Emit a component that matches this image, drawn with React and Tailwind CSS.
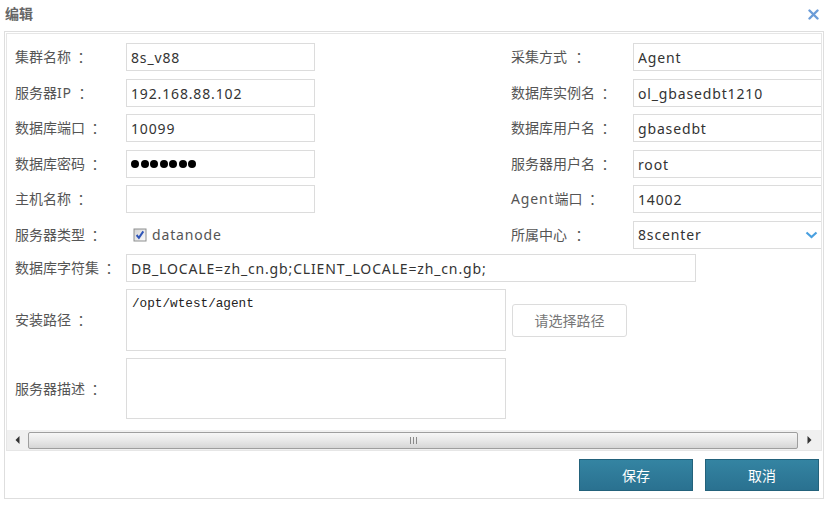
import React from "react";

const FONT = { fontFamily: '"Noto Sans", "Noto Sans CJK SC", sans-serif' };
const COLON_FONT = { fontFamily: '"Noto Sans CJK JP", sans-serif' };

function Field({ value, className = "" }) {
  return (
    <input
      readOnly
      defaultValue={value}
      className={`h-[28px] border border-[#dcdcdc] bg-white px-[4px] text-[14px] tracking-[0.85px] text-[#333] outline-none ${className}`}
      style={FONT}
    />
  );
}

// Form label: text followed by a centred full-width colon
function Label({ children, className = "", wide = false }) {
  return (
    <div className={`shrink-0 h-[28px] flex items-center overflow-visible text-[14px] text-[#555] leading-[20px] whitespace-nowrap ${className}`}>
      <span>{children}</span>
      <span className={wide ? "ml-[5px]" : "ml-[3px]"} style={COLON_FONT}>：</span>
    </div>
  );
}

function Latin({ children }) {
  return <span className="tracking-[0.85px]">{children}</span>;
}

function PasswordField() {
  return (
    <div className="h-[28px] w-[189px] shrink-0 border border-[#dcdcdc] bg-white px-[4px] flex items-center gap-[1.5px]">
      {[0, 1, 2, 3, 4, 5, 6].map((i) => (
        <span key={i} className="block w-[8px] h-[8px] rounded-full bg-black" />
      ))}
    </div>
  );
}

function CheckBox() {
  return (
    <svg width="14" height="14" viewBox="0 0 14 14" className="shrink-0">
      <defs>
        <linearGradient id="cbg" x1="0" y1="0" x2="1" y2="1">
          <stop offset="0" stopColor="#d4d4d4" />
          <stop offset="1" stopColor="#fbfbfb" />
        </linearGradient>
      </defs>
      <rect x="0.5" y="0.5" width="13" height="13" fill="#8e8f8f" />
      <rect x="1.5" y="1.5" width="11" height="11" fill="url(#cbg)" />
      <path d="M3.6 7 L5.9 9.8 L10.3 3.4" fill="none" stroke="#2f55b8" strokeWidth="2" />
    </svg>
  );
}

function Row({ left, right, className = "" }) {
  return (
    <div className={`flex items-center h-[28px] ${className}`}>
      <div className="flex items-center w-[496px] shrink-0">{left}</div>
      {right}
    </div>
  );
}

export default function App() {
  return (
    <div className="w-[832px] h-[506px] bg-white relative overflow-hidden" style={FONT}>
      {/* dialog title bar */}
      <div className="h-[31px] flex items-start justify-between pl-[5px] pr-[13px] pt-[4px]">
        <div className="text-[14px] font-bold text-[#666] leading-[20px]">编辑</div>
        <svg width="11" height="11" viewBox="0 0 11 11" className="mt-[5px]">
          <path d="M1.5 1.5 L9.5 9.5 M9.5 1.5 L1.5 9.5" stroke="#6b9cd8" strokeWidth="2.4" strokeLinecap="round" />
        </svg>
      </div>

      {/* dialog body */}
      <div className="ml-[4px] w-[820px] h-[468px] border border-[#dedede] p-[1px] flex flex-col">
        {/* scrolling form area */}
        <div className="h-[418px] border border-[#e6e6e6] flex flex-col">
          <div className="h-[396px] overflow-hidden pl-[8px] pt-[9px]">
            <div className="w-[830px]">
              <Row
                left={<><Label className="w-[111px]">集群名称</Label><Field value="8s_v88" className="w-[189px]" /></>}
                right={<><Label className="w-[122px]" wide>采集方式</Label><Field value="Agent" className="w-[189px]" /></>}
              />
              <Row
                className="mt-[8px]"
                left={<><Label className="w-[111px]">服务器<Latin>IP</Latin></Label><Field value="192.168.88.102" className="w-[189px]" /></>}
                right={<><Label className="w-[122px]">数据库实例名</Label><Field value="ol_gbasedbt1210" className="w-[189px]" /></>}
              />
              <Row
                className="mt-[7px]"
                left={<><Label className="w-[111px]">数据库端口</Label><Field value="10099" className="w-[189px]" /></>}
                right={<><Label className="w-[122px]">数据库用户名</Label><Field value="gbasedbt" className="w-[189px]" /></>}
              />
              <Row
                className="mt-[8px]"
                left={<><Label className="w-[111px]">数据库密码</Label><PasswordField /></>}
                right={<><Label className="w-[122px]">服务器用户名</Label><Field value="root" className="w-[189px]" /></>}
              />
              <Row
                className="mt-[7px]"
                left={<><Label className="w-[111px]">主机名称</Label><Field value="" className="w-[189px]" /></>}
                right={<><Label className="w-[122px]"><Latin>Agent</Latin>端口</Label><Field value="14002" className="w-[189px]" /></>}
              />
              <Row
                className="mt-[8px]"
                left={
                  <>
                    <Label className="w-[118px]">服务器类型</Label>
                    <CheckBox />
                    <span className="ml-[5px] text-[14px] tracking-[0.85px] text-[#555] leading-[20px]">datanode</span>
                  </>
                }
                right={
                  <>
                    <Label className="w-[122px]" wide>所属中心</Label>
                    <div className="h-[28px] w-[189px] border border-[#dcdcdc] bg-white pl-[4px] flex items-center">
                      <span className="text-[14px] tracking-[0.85px] text-[#333] leading-[20px] flex-1">8scenter</span>
                      <svg width="13" height="8" viewBox="0 0 13 8" className="mr-[3px]">
                        <path d="M1.5 1.5 L6.5 6 L11.5 1.5" fill="none" stroke="#4aa0e0" strokeWidth="2.2" />
                      </svg>
                    </div>
                  </>
                }
              />
              <div className="flex items-center h-[28px] mt-[5px]">
                <Label className="w-[111px]">数据库字符集</Label>
                <Field value="DB_LOCALE=zh_cn.gb;CLIENT_LOCALE=zh_cn.gb;" className="w-[570px]" />
              </div>
              <div className="flex items-center h-[62px] mt-[7px]">
                <Label className="w-[111px]">安装路径</Label>
                <textarea
                  readOnly
                  defaultValue="/opt/wtest/agent"
                  className="w-[380px] h-[62px] border border-[#dcdcdc] resize-none outline-none px-[5px] pt-[6px] text-[12.7px] leading-[16px] text-[#222]"
                  style={{ fontFamily: '"Liberation Mono", monospace' }}
                />
                <button className="ml-[6px] w-[115px] h-[33px] border border-[#dcdcdc] rounded-[3px] bg-white text-[14px] text-[#777]">
                  请选择路径
                </button>
              </div>
              <div className="flex items-center h-[61px] mt-[7px]">
                <Label className="w-[111px]">服务器描述</Label>
                <textarea
                  readOnly
                  defaultValue=""
                  className="w-[380px] h-[61px] border border-[#dcdcdc] resize-none outline-none"
                />
              </div>
            </div>
          </div>

          {/* horizontal scrollbar */}
          <div className="h-[20px] bg-[#f0f0f0] flex items-center">
            <div className="w-[20px] h-full flex items-center justify-center">
              <svg width="5" height="8" viewBox="0 0 5 8"><path d="M4.5 0 L0.5 4 L4.5 8 Z" fill="#333" /></svg>
            </div>
            <div className="ml-[1px] w-[770px] h-[17px] rounded-[2px] border border-[#9e9e9e] bg-gradient-to-b from-[#f6f6f6] via-[#e8e8e8] to-[#d6d6d6] flex items-center justify-center gap-[2px]">
              <span className="block w-px h-[7px] bg-[#8a8a8a]" />
              <span className="block w-px h-[7px] bg-[#8a8a8a]" />
              <span className="block w-px h-[7px] bg-[#8a8a8a]" />
            </div>
            <div className="flex-1 h-full flex items-center justify-center">
              <svg width="5" height="8" viewBox="0 0 5 8"><path d="M0.5 0 L4.5 4 L0.5 8 Z" fill="#333" /></svg>
            </div>
          </div>
        </div>

        {/* action buttons */}
        <div className="flex justify-end gap-[12px] pr-[3px] pt-[8px]">
          <button className="w-[114px] h-[32px] border border-[#23627b] bg-gradient-to-b from-[#3484a2] to-[#2a7190] text-white text-[14px]">
            保存
          </button>
          <button className="w-[114px] h-[32px] border border-[#23627b] bg-gradient-to-b from-[#3484a2] to-[#2a7190] text-white text-[14px]">
            取消
          </button>
        </div>
      </div>
    </div>
  );
}
